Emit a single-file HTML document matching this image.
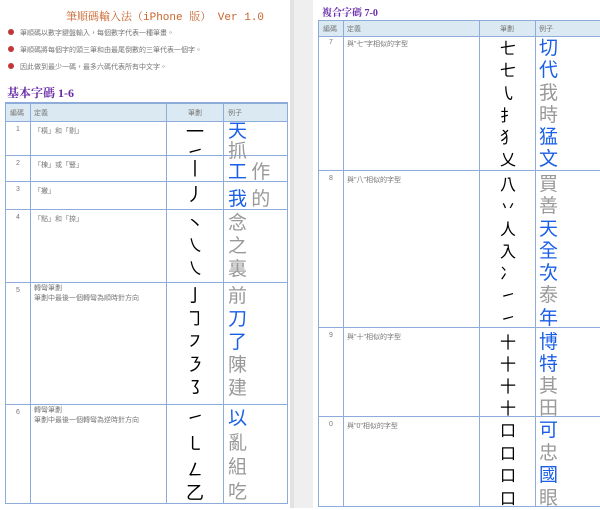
<!DOCTYPE html><html><head><meta charset="utf-8"><style>
body{margin:0;width:600px;height:508px;overflow:hidden;background:#fff;position:relative;font-family:"Liberation Serif","Noto Serif CJK SC",serif}
.a{position:absolute;white-space:nowrap}
.g{position:absolute;background:#efefef;left:290px;top:0;width:23px;height:508px}
.l{position:absolute;background:#8eacd9}
.hd{position:absolute;background:#dbeaf2}
.t{font-size:7px;color:#777;font-family:"Liberation Sans","Noto Sans CJK TC",sans-serif}
.s{font-size:18px;color:#000;font-weight:normal;font-family:"Noto Sans CJK TC",sans-serif;width:30px;text-align:center}
.c{font-size:19px;color:#999;font-family:"Noto Sans CJK TC",sans-serif}
.b{color:#1a5fe8}
.bul{position:absolute;width:6px;height:6px;border-radius:50%;background:#c0383a}
</style></head><body>
<div class="g"></div><div class="a" style="left:290px;top:0;width:4px;height:508px;background:#e2e2e2"></div>
<div class="a" style="left:66px;top:8px;font-size:11px;color:#c8642a;font-family:'Liberation Mono','Noto Serif CJK SC',monospace">筆順碼輸入法（iPhone 版） Ver 1.0</div>
<div class="bul" style="left:8px;top:29px"></div><div class="a t" style="left:20px;top:28px">筆順碼以數字鍵盤輸入，每個數字代表一種筆畫。</div>
<div class="bul" style="left:8px;top:46px"></div><div class="a t" style="left:20px;top:45px">筆順碼將每個字的頭三筆和由最尾倒數的三筆代表一個字。</div>
<div class="bul" style="left:8px;top:63px"></div><div class="a t" style="left:20px;top:62px">因此做到最少一碼，最多六碼代表所有中文字。</div>
<div class="a" style="left:7px;top:84px;font-size:12px;font-weight:bold;color:#6a2aa8">基本字碼 1-6</div>
<div class="hd" style="left:5px;top:102px;width:282px;height:19px"></div>
<div class="l" style="left:5px;top:102px;width:282px;height:2px"></div>
<div class="l" style="left:5px;top:102px;width:1px;height:402px"></div>
<div class="l" style="left:30px;top:102px;width:1px;height:402px"></div>
<div class="l" style="left:166px;top:102px;width:1px;height:402px"></div>
<div class="l" style="left:223px;top:102px;width:1px;height:402px"></div>
<div class="l" style="left:287px;top:102px;width:1px;height:402px"></div>
<div class="l" style="left:5px;top:121px;width:282px;height:1px"></div>
<div class="l" style="left:5px;top:155px;width:282px;height:1px"></div>
<div class="l" style="left:5px;top:181px;width:282px;height:1px"></div>
<div class="l" style="left:5px;top:209px;width:282px;height:1px"></div>
<div class="l" style="left:5px;top:282px;width:282px;height:1px"></div>
<div class="l" style="left:5px;top:404px;width:282px;height:1px"></div>
<div class="l" style="left:5px;top:503px;width:282px;height:1px"></div>
<div class="a t" style="left:10px;top:108px">編碼</div><div class="a t" style="left:34px;top:108px">定義</div><div class="a t" style="left:188px;top:108px">筆劃</div><div class="a t" style="left:228px;top:108px">例子</div>
<div class="a t" style="left:16px;top:126px">1</div><div class="a t" style="left:34px;top:126px">「橫」和「剔」</div>
<div class="a t" style="left:16px;top:160px">2</div><div class="a t" style="left:34px;top:160px">「棟」或「豎」</div>
<div class="a t" style="left:16px;top:186px">3</div><div class="a t" style="left:34px;top:186px">「撇」</div>
<div class="a t" style="left:16px;top:214px">4</div><div class="a t" style="left:34px;top:214px">「點」和「捺」</div>
<div class="a t" style="left:16px;top:287px">5</div><div class="a t" style="left:34px;top:284px;line-height:10px">轉彎筆劃<br>筆劃中最後一個轉彎為順時針方向</div>
<div class="a t" style="left:16px;top:409px">6</div><div class="a t" style="left:34px;top:406px;line-height:10px">轉彎筆劃<br>筆劃中最後一個轉彎為逆時針方向</div>
<div class="a s" style="left:180px;top:118px">一</div><div class="a s" style="left:180px;top:138px">㇀</div>
<div class="a s" style="left:180px;top:155px">丨</div><div class="a s" style="left:180px;top:181px">丿</div>
<div class="a s" style="left:180px;top:210px">丶</div><div class="a s" style="left:180px;top:232px">㇏</div><div class="a s" style="left:180px;top:255px">㇏</div>
<div class="a s" style="left:180px;top:282px">亅</div><div class="a s" style="left:180px;top:305px">㇆</div><div class="a s" style="left:180px;top:328px">㇇</div><div class="a s" style="left:180px;top:351px">㇋</div><div class="a s" style="left:180px;top:374px">㇌</div>
<div class="a s" style="left:180px;top:404px">㇀</div><div class="a s" style="left:180px;top:430px">㇄</div><div class="a s" style="left:180px;top:456px">㇜</div><div class="a s" style="left:180px;top:479px">乙</div>
<div class="a c" style="left:228px;top:120px;line-height:20px"><span class="b">天</span><br>抓</div>
<div class="a c" style="left:228px;top:157px"><span class="b">工</span> 作</div>
<div class="a c" style="left:228px;top:184px"><span class="b">我</span> 的</div>
<div class="a c" style="left:228px;top:210px;line-height:23px">念<br>之<br>裏</div>
<div class="a c" style="left:228px;top:283px;line-height:23px">前<br><span class="b">刀</span><br><span class="b">了</span><br>陳<br>建</div>
<div class="a c" style="left:228px;top:405px;line-height:24.5px"><span class="b">以</span><br>亂<br>組<br>吃</div>
<div class="a" style="left:322px;top:4px;font-size:10px;font-weight:bold;color:#6a2aa8">複合字碼 7-0</div>
<div class="hd" style="left:318px;top:20px;width:282px;height:16px"></div>
<div class="l" style="left:318px;top:20px;width:282px;height:1px"></div>
<div class="l" style="left:318px;top:20px;width:1px;height:486px"></div>
<div class="l" style="left:343px;top:20px;width:1px;height:486px"></div>
<div class="l" style="left:479px;top:20px;width:1px;height:486px"></div>
<div class="l" style="left:535px;top:20px;width:1px;height:486px"></div>
<div class="l" style="left:318px;top:36px;width:282px;height:1px"></div>
<div class="l" style="left:318px;top:170px;width:282px;height:1px"></div>
<div class="l" style="left:318px;top:327px;width:282px;height:1px"></div>
<div class="l" style="left:318px;top:416px;width:282px;height:1px"></div>
<div class="l" style="left:318px;top:506px;width:282px;height:1px"></div>
<div class="a t" style="left:323px;top:24px">編碼</div><div class="a t" style="left:347px;top:24px">定義</div><div class="a t" style="left:500px;top:24px">筆劃</div><div class="a t" style="left:539px;top:24px">例子</div>
<div class="a t" style="left:329px;top:39px">7</div><div class="a t" style="left:347px;top:39px">與"七"字相似的字型</div>
<div class="a t" style="left:329px;top:175px">8</div><div class="a t" style="left:347px;top:175px">與"八"相似的字型</div>
<div class="a t" style="left:329px;top:332px">9</div><div class="a t" style="left:347px;top:332px">與"十"相似的字型</div>
<div class="a t" style="left:329px;top:421px">0</div><div class="a t" style="left:347px;top:421px">與"0"相似的字型</div>
<div class="a s" style="left:493px;top:36px;line-height:22.3px;font-size:16px">七<br>七<br>㇂<br>扌<br>犭<br>乂</div>
<div class="a s" style="left:493px;top:172px;line-height:22.3px;font-size:16px">八<br>丷<br>人<br>入<br>冫<br>㇀<br>㇀</div>
<div class="a s" style="left:493px;top:330px;line-height:22px;font-size:16px">十<br>十<br>十<br>十</div>
<div class="a s" style="left:493px;top:418px;line-height:22.5px;font-size:16px">口<br>口<br>口<br>口</div>
<div class="a c" style="left:539px;top:36px;line-height:22.3px"><span class="b">切</span><br><span class="b">代</span><br>我<br>時<br><span class="b">猛</span><br><span class="b">文</span></div>
<div class="a c" style="left:539px;top:172px;line-height:22.3px">買<br>善<br><span class="b">天</span><br><span class="b">全</span><br><span class="b">次</span><br>泰<br><span class="b">年</span></div>
<div class="a c" style="left:539px;top:330px;line-height:22px"><span class="b">博</span><br><span class="b">特</span><br>其<br>田</div>
<div class="a c" style="left:539px;top:418px;line-height:22.5px"><span class="b">可</span><br>忠<br><span class="b">國</span><br>眼</div>
</body></html>
